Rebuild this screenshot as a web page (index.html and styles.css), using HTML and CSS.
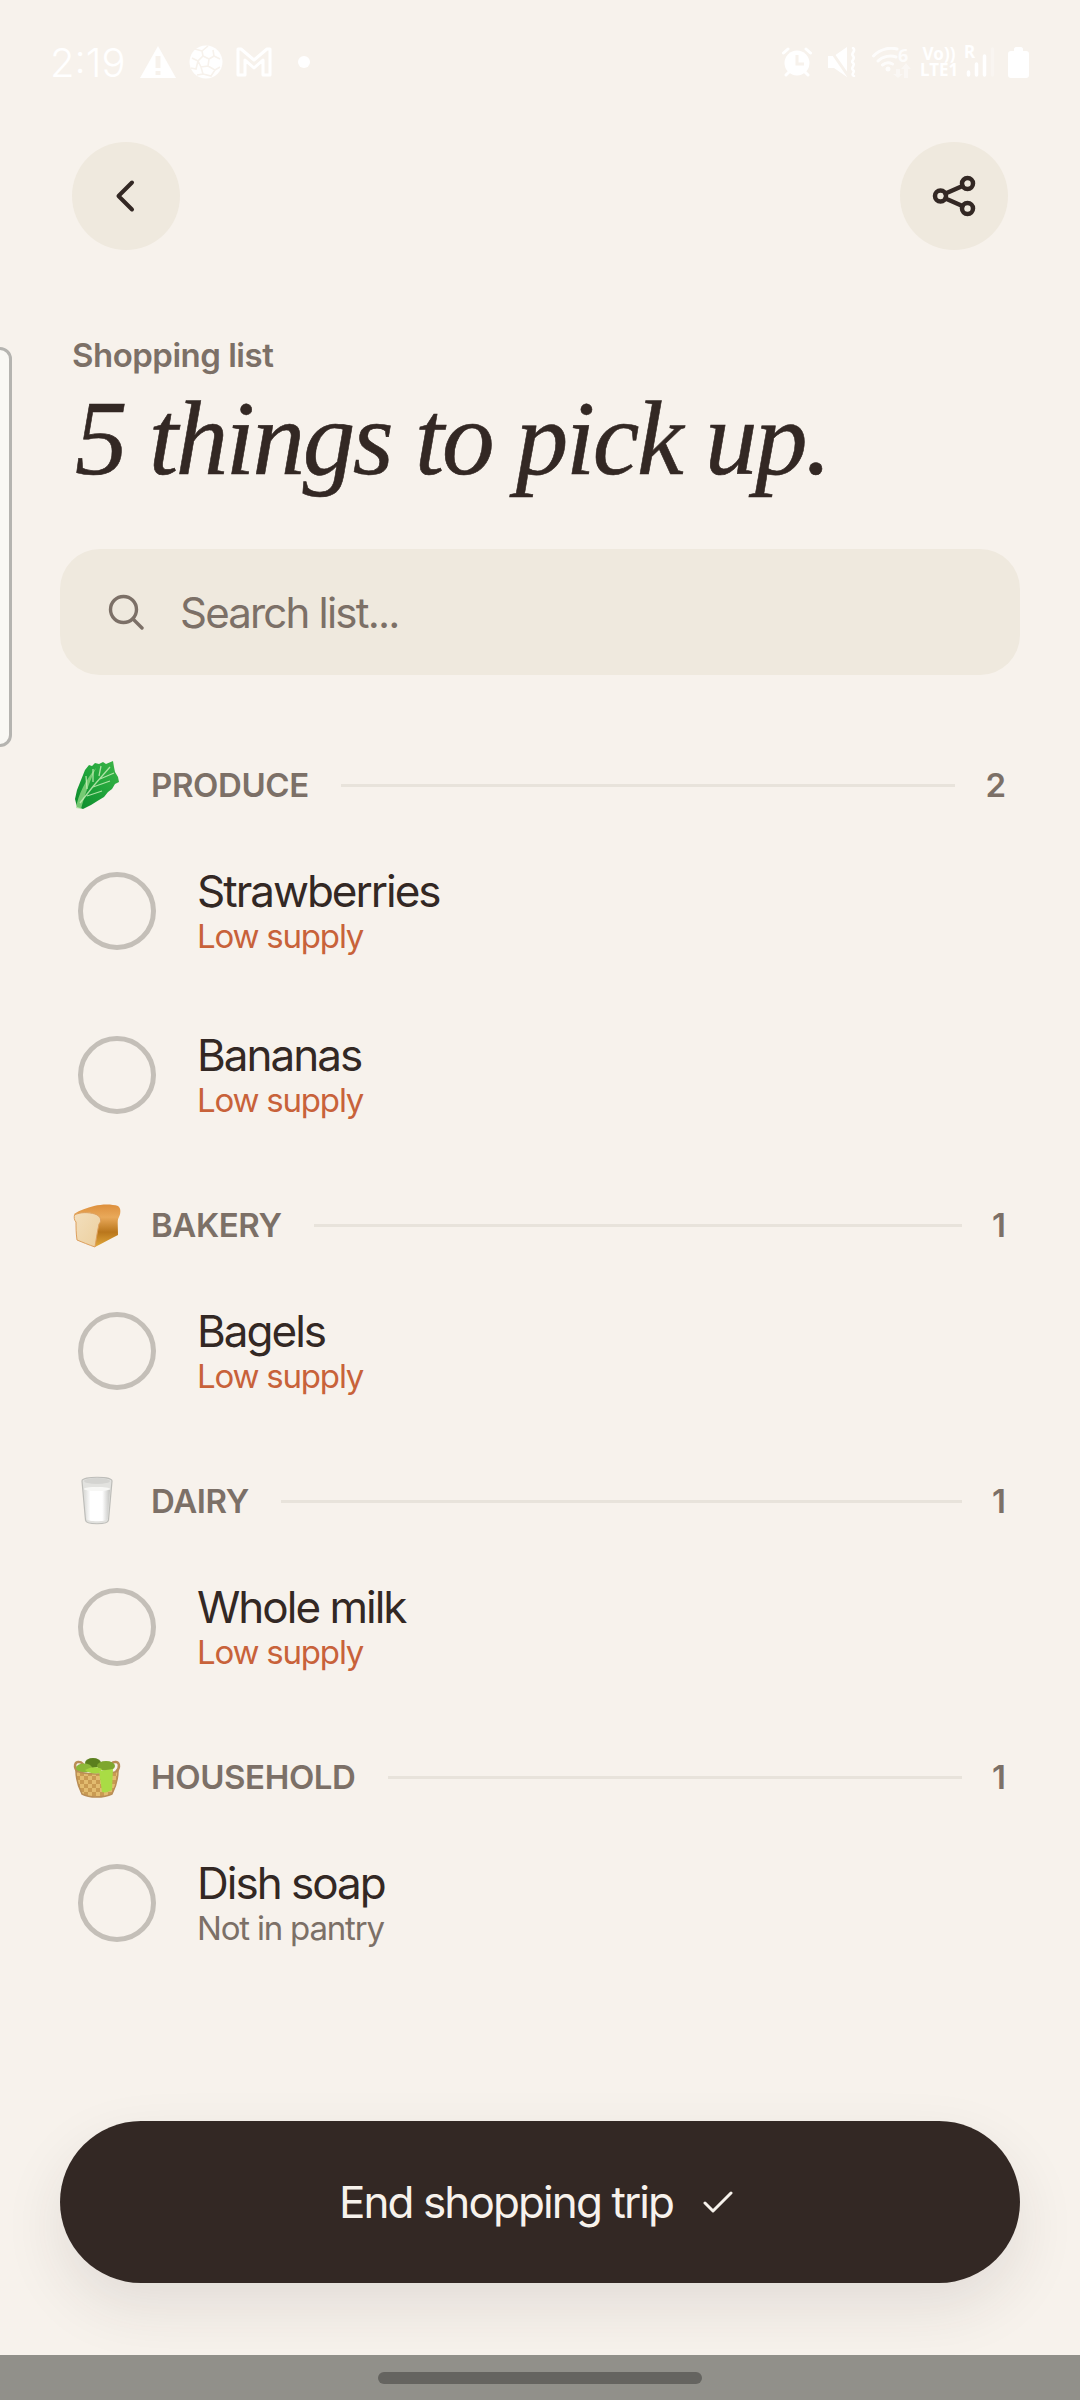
FILE: index.html
```html
<!DOCTYPE html>
<html lang="en">
<head>
    <meta charset="UTF-8">
    <meta name="viewport" content="width=device-width, initial-scale=1.0">
    <title>Shopping list</title>
    <link rel="stylesheet" href="styles.css">
</head>
<body>
    <div class="status-bar">
        <div class="status-left">
            <span class="clock">2:19</span>
            <svg width="36" height="32" viewBox="0 0 36 32"><path fill="#fff" fill-rule="evenodd" d="M18 0 36 32H0ZM15.500 10v12h5V10ZM15.500 25v4h5v-4Z"/></svg>
            <svg width="34" height="34" viewBox="0 0 34 34"><circle cx="17" cy="17" r="16.500" fill="#fff"/><path fill="none" stroke="#f7f2ec" stroke-width="1.600" d="M14 11 20 14 19 21 12 22 9 16ZM14 11 13 6 19 1M13 6 6 4M20 14 25 11 24 5M25 11 31 14M9 16 3 13M9 16 7 24 2 23M12 22 14 29 8 30M19 21 26 25 22 31 14 29M26 25 31 22"/></svg>
            <svg width="36" height="30" viewBox="0 0 36 30"><path fill="none" stroke="#fff" stroke-width="3" stroke-linejoin="round" d="M2 2h3l13 11L31 2h3v26h-7V13l-9 8-9-8v15H2Z"/></svg>
            <span class="notif-dot"></span>
        </div>
        <div class="status-right">
            <svg class="st-alarm" width="30" height="30" viewBox="0 0 30 30"><circle cx="15" cy="16" r="12.500" fill="#fff"/><path fill="none" stroke="#f7f2ec" stroke-width="3" d="M15 8v9h7"/><path fill="none" stroke="#fff" stroke-width="3" stroke-linecap="round" d="M1.500 6 6 2M28.500 6 24 2M4 28l3-3M26 28l-3-3"/></svg>
            <svg class="st-mute" width="30" height="30" viewBox="0 0 30 30"><path fill="#fff" d="M1 9h6l13-9v30L7 21H1Z"/><path stroke="#f7f2ec" stroke-width="3" d="M2 1 22 30"/><path fill="none" stroke="#fff" stroke-width="2.500" stroke-linecap="round" d="M26 1c4 3-3 5 0 8s-3 5 0 7-3 5 0 7-3 4 1 6"/></svg>
            <div class="st-wifi">
                <svg width="43" height="31" viewBox="0 0 43 31"><path fill="none" stroke="#fff" stroke-width="3" stroke-linecap="round" d="M1.500 9C8 2 18 0 25 2M6 14c5-5 13-6 18-4M10.500 18c3-2.500 7-2.500 10-1"/><circle cx="16" cy="22" r="2.500" fill="#fff"/><path fill="#fff" opacity="0.55" d="M24 22h4v5h3l-5 4-5-4h3ZM36 31h-4v-9h-3l5-6 5 6h-3Z"/></svg>
                <span class="net-num">6</span>
            </div>
            <div class="st-volte">Vo))<br>LTE1</div>
            <div class="st-signal">
                <span class="signal-r">R</span>
                <svg width="31" height="30" viewBox="0 0 31 30"><path fill="none" stroke="#fff" stroke-width="3.500" stroke-linecap="round" d="M4.500 28v-3M12.500 28V17M20.500 28V9"/><path fill="none" stroke="#fff" stroke-width="3.500" stroke-linecap="round" opacity="0.25" d="M28.500 28V2"/></svg>
            </div>
            <svg class="st-battery" width="21" height="31" viewBox="0 0 21 31"><path fill="#fff" d="M6 2c0-1 1-2 2-2h5c1 0 2 1 2 2v2h3c2 0 3 1 3 3v21c0 2-1 3-3 3H3c-2 0-3-1-3-3V7c0-2 1-3 3-3h3Z"/></svg>
        </div>
    </div>

    <div class="edge-tab"></div>

    <header class="top-bar">
        <button class="round-btn" aria-label="Back">
            <svg width="36" height="36" viewBox="0 0 36 36"><path class="icon-stroke" d="M24 4.500 10.500 18 24 31.500"/></svg>
        </button>
        <button class="round-btn" aria-label="Share">
            <svg width="44" height="44" viewBox="0 0 44 44"><path class="icon-stroke thick" d="M13.500 19.500 30.500 12M13.500 24.500 30.500 32"/><circle class="icon-stroke thick" cx="8.500" cy="22" r="5.500"/><circle class="icon-stroke thick" cx="35.500" cy="9.500" r="5.500"/><circle class="icon-stroke thick" cx="35.500" cy="34.500" r="5.500"/></svg>
        </button>
    </header>

    <main class="content">
        <p class="eyebrow">Shopping list</p>
        <h1 class="title">5 things to pick up.</h1>

        <div class="search">
            <svg width="36" height="36" viewBox="0 0 36 36"><circle cx="15.500" cy="15.500" r="13" fill="none" stroke="#7c7067" stroke-width="3.400"/><path stroke="#7c7067" stroke-width="3.400" stroke-linecap="round" d="M25 25 34 34"/></svg>
            <span class="search-text">Search list...</span>
        </div>

        <section class="group">
            <div class="group-head">
                <svg class="emoji" width="50" height="52" viewBox="0 0 50 52">
                    <defs><linearGradient id="leaf" x1="0" y1="1" x2="1" y2="0"><stop offset="0" stop-color="#0b8a2c"/><stop offset="0.55" stop-color="#22a63c"/><stop offset="1" stop-color="#3fb548"/></linearGradient></defs>
                    <path fill="url(#leaf)" d="M5 48 3 40 5 31 9 21 13 11 17 6 20 7 23 4 27 5 31 3 34 5 41 2 42 8 43 13 46 18 47 23 43 25 40 30 36 33 32 38 27 41 19 46 11 50Z"/>
                    <path fill="#9fe08f" opacity="0.7" d="M4 49C6 36 14 20 24 9 17 24 12 38 9 50Z"/>
                    <path fill="none" stroke="#cdf0bd" stroke-width="1.300" opacity="0.8" d="M8 44C17 32 27 20 38 8M15 30 14 17M21 23 21 10M27 17 29 7M15 37 30 32M21 28 38 22M28 20 42 14"/>
                </svg>
                <span class="group-name">PRODUCE</span>
                <span class="group-line"></span>
                <span class="group-count">2</span>
            </div>
            <div class="item">
                <span class="check"></span>
                <div class="item-text"><div class="item-name">Strawberries</div><div class="item-note low">Low supply</div></div>
            </div>
            <div class="item">
                <span class="check"></span>
                <div class="item-text"><div class="item-name">Bananas</div><div class="item-note low">Low supply</div></div>
            </div>
        </section>

        <section class="group">
            <div class="group-head">
                <svg class="emoji" width="50" height="50" viewBox="0 0 50 50">
                    <defs>
                        <linearGradient id="crust" x1="0" y1="0" x2="0" y2="1"><stop offset="0" stop-color="#dd8f3c"/><stop offset="0.3" stop-color="#e9a95a"/><stop offset="0.65" stop-color="#b9761c"/><stop offset="1" stop-color="#e2a93c"/></linearGradient>
                        <linearGradient id="crumb" x1="0" y1="0" x2="1" y2="1"><stop offset="0" stop-color="#f3dfbd"/><stop offset="1" stop-color="#eccf9e"/></linearGradient>
                    </defs>
                    <path fill="url(#crust)" d="M2 14C8 10 15 8 22 6 30 4 40 4 46 6 49 8 49 13 47 17 45 20 46 23 46 35 38 39 31 43 23 47Z"/>
                    <path fill="url(#crumb)" stroke="#dd9f5c" stroke-width="1" d="M2.500 15C8 12 16 12 23 14 29 16 30 21 27 24 25 33 24 41 23 47 17 45 10 42 5 40 4 33 4 27 4 22 2 20 2 17 2.500 15Z"/>
                </svg>
                <span class="group-name">BAKERY</span>
                <span class="group-line"></span>
                <span class="group-count">1</span>
            </div>
            <div class="item">
                <span class="check"></span>
                <div class="item-text"><div class="item-name">Bagels</div><div class="item-note low">Low supply</div></div>
            </div>
        </section>

        <section class="group">
            <div class="group-head">
                <svg class="emoji" width="50" height="52" viewBox="0 0 50 52">
                    <defs><linearGradient id="milk" x1="0" y1="0" x2="1" y2="0"><stop offset="0" stop-color="#d9d9d6"/><stop offset="0.25" stop-color="#fff"/><stop offset="0.7" stop-color="#fff"/><stop offset="1" stop-color="#c4c4c1"/></linearGradient></defs>
                    <path fill="#e2e2df" stroke="#bdbdb9" stroke-width="1.200" d="M10 6C10 1 40 1 40 6L36.500 45C36 50 14 50 13.500 45Z"/>
                    <ellipse cx="25" cy="6" rx="13" ry="3" fill="#d4d4d1"/>
                    <path fill="url(#milk)" d="M12 15C14 11 36 11 38 15L35.500 44C34 47 16 47 14.500 44Z"/>
                    <ellipse cx="25" cy="14" rx="13" ry="2" fill="#f7f7f5"/>
                </svg>
                <span class="group-name">DAIRY</span>
                <span class="group-line"></span>
                <span class="group-count">1</span>
            </div>
            <div class="item">
                <span class="check"></span>
                <div class="item-text"><div class="item-name">Whole milk</div><div class="item-note low">Low supply</div></div>
            </div>
        </section>

        <section class="group">
            <div class="group-head">
                <svg class="emoji" width="50" height="50" viewBox="0 0 50 50">
                    <defs><pattern id="weave" width="8" height="8" patternUnits="userSpaceOnUse"><rect width="8" height="8" fill="#c99a52"/><rect x="0" y="0" width="4" height="4" fill="#e2bb6f"/><rect x="4" y="4" width="4" height="4" fill="#e2bb6f"/></pattern></defs>
                    <path fill="none" stroke="#b98d55" stroke-width="2.500" d="M6 20C1 15 3 9 7 10 10 10 12 13 12 15M44 20C49 15 47 9 43 10 40 10 38 13 38 15"/>
                    <ellipse cx="21" cy="11" rx="8" ry="5" fill="#5b7f1e"/>
                    <ellipse cx="12" cy="16" rx="8" ry="4.500" fill="#8db838"/>
                    <ellipse cx="34" cy="14" rx="9" ry="5" fill="#7ea62e"/>
                    <path fill="url(#weave)" stroke="#b98d55" stroke-width="1.500" d="M4 19C14 23 36 23 46 19 46 28 43 36 40 42 32 46 17 46 10 42 7 36 4 28 4 19Z"/>
                    <path fill="#a5d63f" d="M13 18C18 15 24 14 30 17L28 21C22 22 16 21 13 18Z"/>
                    <path fill="#a9dc45" d="M27 19 41 17 40 38C36 40 33 41 30 40 29 33 28 26 27 19Z"/>
                </svg>
                <span class="group-name">HOUSEHOLD</span>
                <span class="group-line"></span>
                <span class="group-count">1</span>
            </div>
            <div class="item">
                <span class="check"></span>
                <div class="item-text"><div class="item-name">Dish soap</div><div class="item-note">Not in pantry</div></div>
            </div>
        </section>
    </main>

    <div class="end-wrap">
        <button class="end-btn">
            <span>End shopping trip</span>
            <svg width="30" height="24" viewBox="0 0 30 24"><path fill="none" stroke="#f7f2ec" stroke-width="3" stroke-linecap="round" stroke-linejoin="round" d="M2 13 10 21 28 3"/></svg>
        </button>
    </div>

    <div class="nav-bar"><span class="nav-handle"></span></div>
</body>
</html>
```

FILE: styles.css
```css
* {
    box-sizing: border-box;
}

html, body {
    margin: 0;
    padding: 0;
}

body {
    position: relative;
    width: 1080px;
    height: 2400px;
    overflow: hidden;
    background-color: #f7f2ec;
    color: #332824;
    font-family: Inter, "Noto Sans", sans-serif;
}

/* status bar */
.status-bar {
    height: 142px;
    padding: 0 51px 18px 50px;
    display: flex;
    justify-content: space-between;
    align-items: center;
}

.status-left, .status-right {
    display: flex;
    align-items: center;
}

.status-left {
    gap: 13px;
}

.clock {
    color: #fff;
    font-size: 40px;
    font-weight: 300;
    width: 77px;
}

.notif-dot {
    width: 12px;
    height: 12px;
    margin-left: 13px;
    border-radius: 50%;
    background-color: #fff;
}

.st-mute {
    margin-left: 15px;
}

.st-wifi {
    position: relative;
    margin-left: 15px;
    width: 43px;
    height: 31px;
    opacity: 0.8;
}

.st-wifi svg {
    display: block;
}

.net-num {
    position: absolute;
    left: 26px;
    top: -1px;
    color: #fff;
    font-family: "Noto Sans", sans-serif;
    font-size: 18px;
    line-height: 18px;
    font-weight: 700;
}

.st-volte {
    margin-left: 5px;
    width: 38px;
    color: #fff;
    font-family: "Noto Sans", sans-serif;
    font-size: 17px;
    font-weight: 700;
    line-height: 16px;
    text-align: center;
    white-space: nowrap;
}

.st-signal {
    position: relative;
    margin-left: 6px;
    width: 31px;
    height: 30px;
}

.st-signal svg {
    display: block;
}

.signal-r {
    position: absolute;
    left: 0;
    top: -4px;
    color: #fff;
    font-family: "Noto Sans", sans-serif;
    font-size: 17px;
    line-height: 18px;
    font-weight: 700;
}

.st-battery {
    margin-left: 13px;
}

/* thin handle on the left screen edge */
.edge-tab {
    position: absolute;
    left: -20px;
    top: 347px;
    width: 32px;
    height: 400px;
    background-color: #f9f8f4;
    border: 3px solid #b5b4b0;
    border-radius: 12px;
}

.top-bar {
    display: flex;
    justify-content: space-between;
    padding: 0 72px;
}

.round-btn {
    width: 108px;
    height: 108px;
    border: none;
    padding: 0;
    border-radius: 50%;
    background-color: #efe9de;
    display: flex;
    align-items: center;
    justify-content: center;
}

.icon-stroke {
    fill: none;
    stroke: #332824;
    stroke-width: 4;
    stroke-linecap: round;
    stroke-linejoin: round;
}

.icon-stroke.thick {
    stroke-width: 4.500;
}

.content {
    padding: 84px 60px 0;
}

.eyebrow {
    margin: 0 0 0 12px;
    font-size: 33px;
    line-height: 42px;
    font-weight: 600;
    letter-spacing: -0.5px;
    color: #7c7067;
}

.title {
    margin: 8px 0 0 15px;
    font-family: "Liberation Serif", serif;
    font-style: italic;
    font-weight: 400;
    font-size: 105px;
    line-height: 110px;
    letter-spacing: -2.4px;
    white-space: nowrap;
    -webkit-text-stroke: 0.6px #332824;
    color: #332824;
}

.search {
    margin-top: 55px;
    height: 126px;
    border-radius: 40px;
    background-color: #efe9de;
    display: flex;
    align-items: center;
    padding-left: 48px;
    gap: 36px;
}

.search-text {
    font-size: 42px;
    font-weight: 400;
    letter-spacing: -1.8px;
    color: #7c7067;
}

.search + .group {
    margin-top: 80px;
}

.group {
    margin-bottom: 38px;
}

.group-head {
    display: flex;
    align-items: center;
    height: 60px;
    padding: 0 14px 0 12px;
    margin-bottom: 14px;
}

.emoji {
    flex: none;
    margin-right: 29px;
}

.group-name {
    font-size: 33px;
    font-weight: 600;
    letter-spacing: -0.4px;
    color: #7c7067;
}

.group-line {
    flex: 1;
    height: 3px;
    margin: 0 30px 0 32px;
    background-color: #e8e3db;
}

.group-count {
    font-size: 33px;
    font-weight: 600;
    color: #7c7067;
}

.item {
    display: flex;
    align-items: center;
    height: 164px;
    padding-left: 18px;
    gap: 41px;
}

.check {
    width: 78px;
    height: 78px;
    border: 5px solid #c4bfb8;
    border-radius: 50%;
    flex: none;
}

.item-name {
    font-size: 44px;
    line-height: 50px;
    letter-spacing: -2px;
    color: #332824;
}

.item-note {
    font-size: 33px;
    line-height: 40px;
    letter-spacing: -1.2px;
    color: #7c7067;
}

.item-note.low {
    color: #c8623a;
}

/* bottom button */
.end-wrap {
    position: absolute;
    left: 60px;
    right: 60px;
    top: 2121px;
}

.end-btn {
    width: 100%;
    height: 162px;
    border: none;
    border-radius: 81px;
    padding: 0 8px 0 0;
    background-color: #332824;
    color: #f7f2ec;
    font-family: Inter, "Noto Sans", sans-serif;
    font-size: 44px;
    letter-spacing: -1.9px;
    display: flex;
    align-items: center;
    justify-content: center;
    gap: 30px;
    box-shadow: 0 24px 60px rgba(51, 40, 36, 0.1);
}

.nav-bar {
    position: absolute;
    left: 0;
    right: 0;
    bottom: 0;
    height: 45px;
    background-color: #91908a;
    display: flex;
    justify-content: center;
    padding-top: 17px;
}

.nav-handle {
    width: 324px;
    height: 12px;
    border-radius: 6px;
    background-color: #656460;
}
```
